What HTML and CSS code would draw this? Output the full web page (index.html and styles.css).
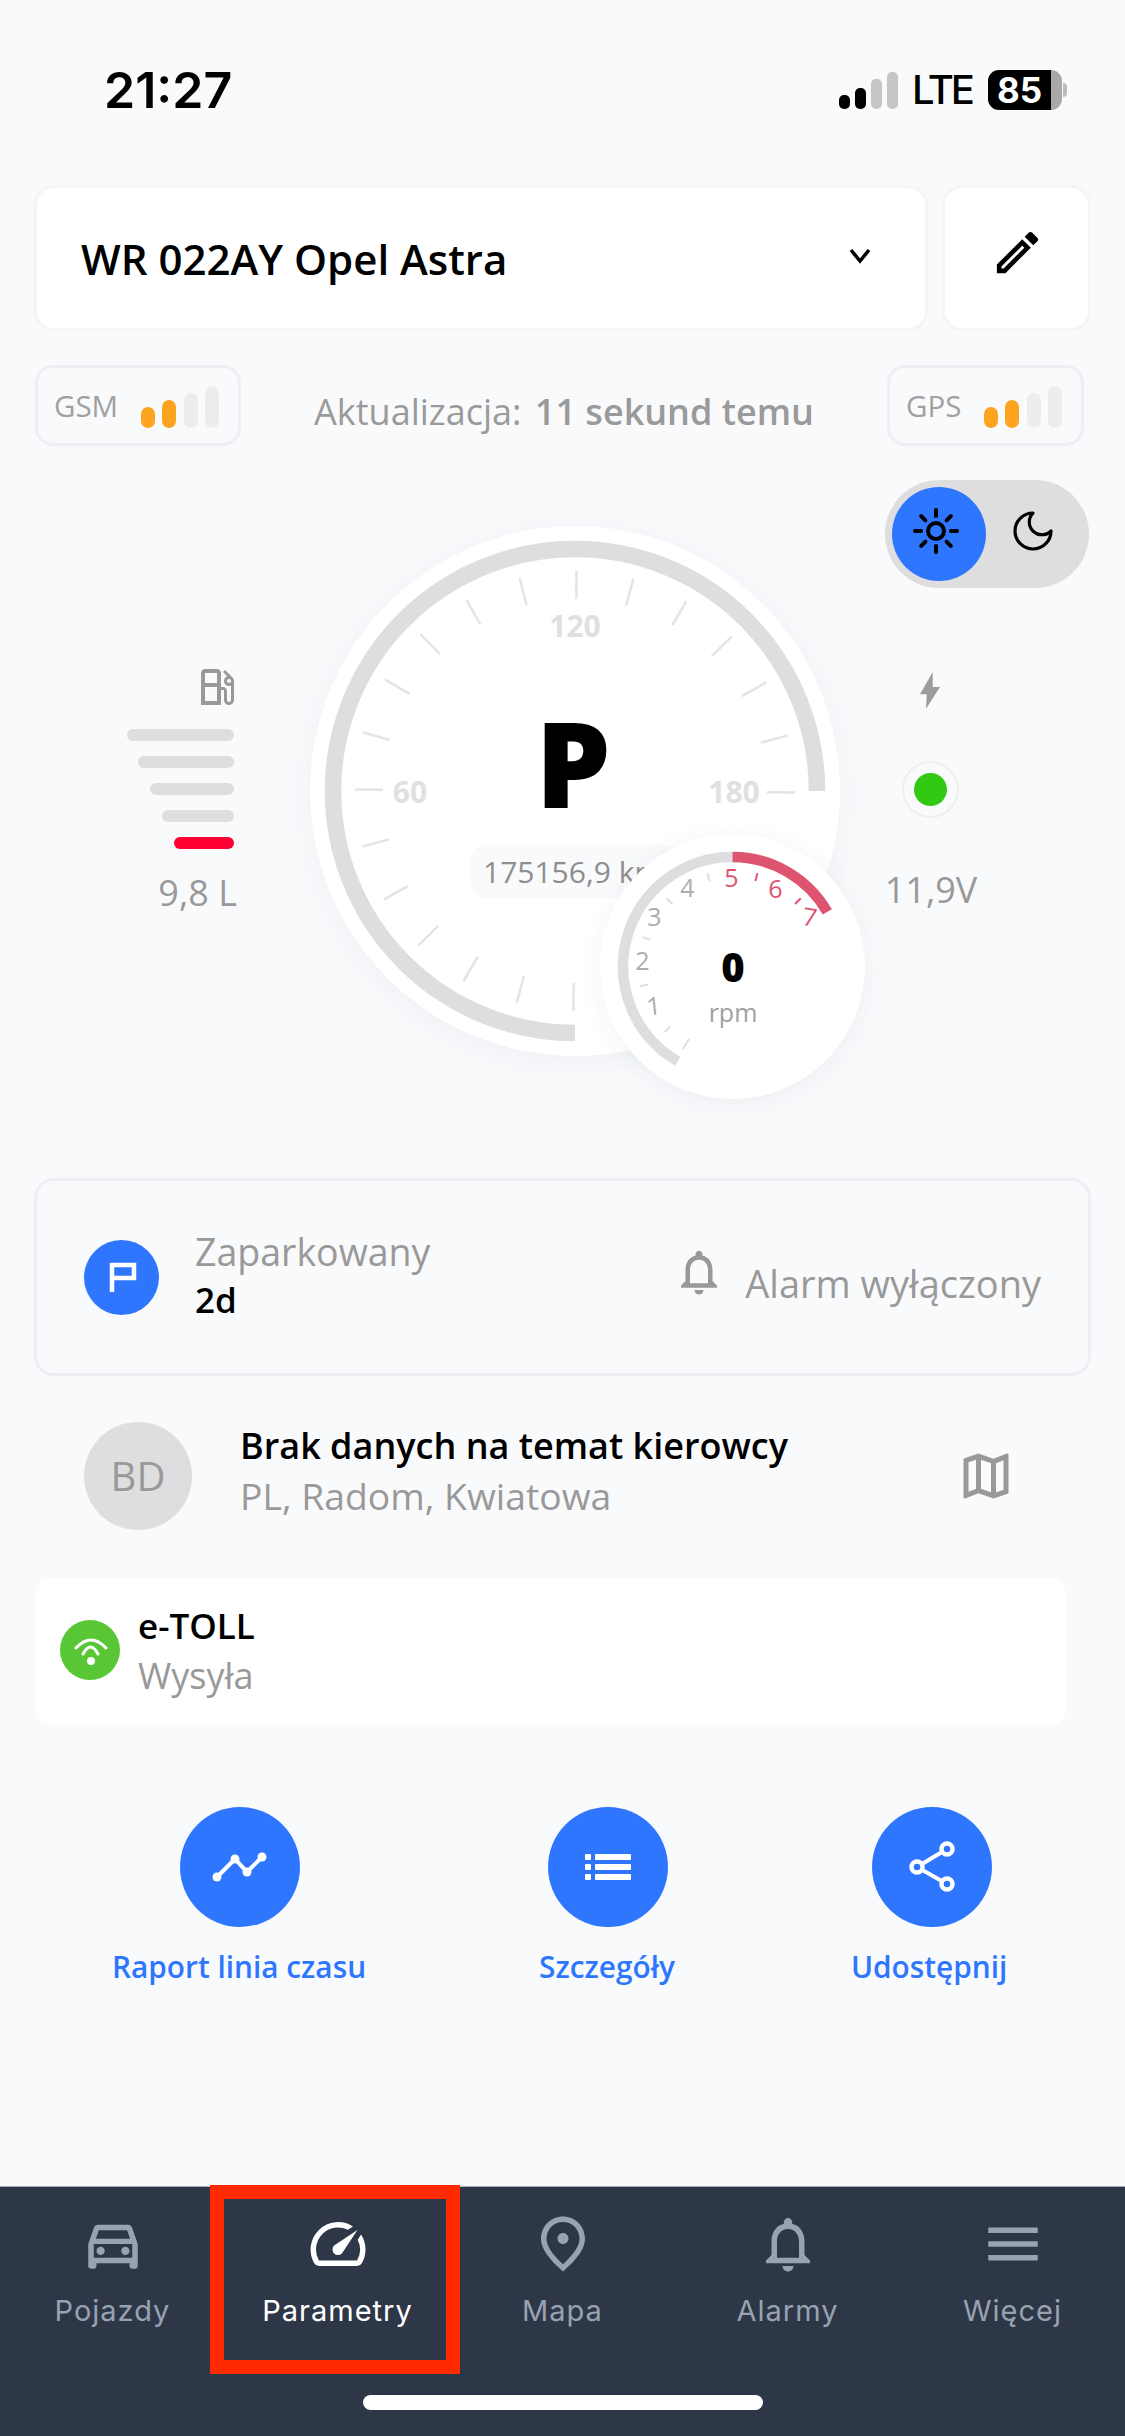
FILE: index.html
```html
<!DOCTYPE html>
<html lang="pl">

<head>
    <meta charset="UTF-8">
    <meta name="viewport" content="width=device-width, initial-scale=1.0">
    <title>Parametry</title>
    <link rel="stylesheet" href="styles.css">
</head>

<body>
    <div class="page">
        <!-- Status bar -->
        <div class="status">
            <span class="time">21:27</span>
            <div class="status-right">
                <div class="cell-bars">
                    <i class="on h1"></i><i class="on h2"></i><i class="h3"></i><i class="h4"></i>
                </div>
                <span class="lte">LTE</span>
                <div class="battery"><span>85</span></div>
                <div class="battery-nub"></div>
            </div>
        </div>

        <!-- Vehicle selector -->
        <div class="vehicle-row">
            <div class="card vehicle-select">
                <span>WR 022AY Opel Astra</span>
                <svg class="chevron" viewBox="0 0 24 16"><polyline points="3,2 12,13 21,2"></polyline></svg>
            </div>
            <div class="card vehicle-edit">
                <svg class="icon-edit" viewBox="0 0 24 24"><path d="M14.06 9.02l.92.92L5.92 19H5v-.92l9.06-9.06M17.66 3c-.25 0-.51.1-.7.29l-1.83 1.83 3.75 3.75 1.83-1.83c.39-.39.39-1.02 0-1.41l-2.34-2.34c-.2-.2-.45-.29-.71-.29zm-3.6 3.19L3 17.25V21h3.75L17.81 9.94l-3.75-3.75z"></path></svg>
            </div>
        </div>

        <!-- GSM / GPS -->
        <div class="signal-row">
            <div class="chip">
                <span>GSM</span>
                <div class="chip-bars"><i class="on h1"></i><i class="on h2"></i><i class="h3"></i><i class="h4"></i></div>
            </div>
            <p class="updated">Aktualizacja: <b>11 sekund temu</b></p>
            <div class="chip chip-gps">
                <span>GPS</span>
                <div class="chip-bars"><i class="on h1"></i><i class="on h2"></i><i class="h3"></i><i class="h4"></i></div>
            </div>
        </div>

        <!-- Dashboard -->
        <div class="dash">
            <div class="fuel">
                <svg class="icon-fuel" viewBox="0 0 24 24"><path d="M19.77 7.23l.01-.01-3.72-3.72L15 4.56l2.11 2.11c-.94.36-1.61 1.26-1.61 2.33 0 1.38 1.12 2.5 2.5 2.5.36 0 .69-.08 1-.21v7.21c0 .55-.45 1-1 1s-1-.45-1-1V14c0-1.1-.9-2-2-2h-1V5c0-1.1-.9-2-2-2H6c-1.1 0-2 .9-2 2v16h10v-7.5h1.5v5c0 1.38 1.12 2.5 2.5 2.5s2.5-1.12 2.5-2.5V9c0-.69-.28-1.32-.73-1.77zM12 13.5V19H6v-7h6v1.5zm0-3.5H6V5h6v5zm6 0c-.55 0-1-.45-1-1s.45-1 1-1 1 .45 1 1-.45 1-1 1z"></path></svg>
                <div class="fuel-bars">
                    <i class="b1"></i><i class="b2"></i><i class="b3"></i><i class="b4"></i><i class="b5"></i>
                </div>
                <span class="fuel-label">9,8 L</span>
            </div>

            <div class="gauge">
                <div class="speedo">
                    <svg viewBox="0 0 530 530">
                        <path class="speedo-arc" d="M507 265 A242 242 0 1 0 265 507"></path>
                        <g class="ticks" transform="rotate(0.4 265 265)">
                            <line x1="457" y1="265" x2="485" y2="265"></line>
                            <line x1="457" y1="265" x2="485" y2="265" transform="rotate(-15 265 265)"></line>
                            <line x1="457" y1="265" x2="485" y2="265" transform="rotate(-30 265 265)"></line>
                            <line x1="457" y1="265" x2="485" y2="265" transform="rotate(-45 265 265)"></line>
                            <line x1="457" y1="265" x2="485" y2="265" transform="rotate(-60 265 265)"></line>
                            <line x1="457" y1="265" x2="485" y2="265" transform="rotate(-75 265 265)"></line>
                            <line x1="457" y1="265" x2="485" y2="265" transform="rotate(-90 265 265)"></line>
                            <line x1="457" y1="265" x2="485" y2="265" transform="rotate(-105 265 265)"></line>
                            <line x1="457" y1="265" x2="485" y2="265" transform="rotate(-120 265 265)"></line>
                            <line x1="457" y1="265" x2="485" y2="265" transform="rotate(-135 265 265)"></line>
                            <line x1="457" y1="265" x2="485" y2="265" transform="rotate(-150 265 265)"></line>
                            <line x1="457" y1="265" x2="485" y2="265" transform="rotate(-165 265 265)"></line>
                            <line x1="457" y1="265" x2="485" y2="265" transform="rotate(-180 265 265)"></line>
                            <line x1="457" y1="265" x2="485" y2="265" transform="rotate(-195 265 265)"></line>
                            <line x1="457" y1="265" x2="485" y2="265" transform="rotate(-210 265 265)"></line>
                            <line x1="457" y1="265" x2="485" y2="265" transform="rotate(-225 265 265)"></line>
                            <line x1="457" y1="265" x2="485" y2="265" transform="rotate(-240 265 265)"></line>
                            <line x1="457" y1="265" x2="485" y2="265" transform="rotate(-255 265 265)"></line>
                            <line x1="457" y1="265" x2="485" y2="265" transform="rotate(-270 265 265)"></line>
                        </g>
                        <text class="speed-num" x="100" y="277">60</text>
                        <text class="speed-num" x="265" y="111">120</text>
                        <text class="speed-num" x="424" y="277">180</text>
                        <text class="gear" x="263" y="282">P</text>
                        <rect class="odo-pill" x="161" y="319" width="207" height="53" rx="14"></rect>
                        <text class="odo" x="173" y="357">175156,9 km</text>
                    </svg>
                </div>

                <div class="rpm">
                    <svg viewBox="0 0 265 265">
                        <path class="rpm-arc" d="M132.5 23 A109.5 109.5 0 0 0 77.75 227.3"></path>
                        <path class="rpm-arc red" d="M132.5 23 A109.5 109.5 0 0 1 227.3 77.75"></path>
                        <g class="rpm-ticks">
                            <line x1="132.5" y1="36" x2="132.5" y2="48" transform="rotate(-149 132.5 132.5)"></line>
                            <line x1="132.5" y1="38" x2="132.5" y2="46" transform="rotate(-134 132.5 132.5)"></line>
                            <line x1="132.5" y1="38" x2="132.5" y2="46" transform="rotate(-102 132.5 132.5)"></line>
                            <line x1="132.5" y1="38" x2="132.5" y2="46" transform="rotate(-72 132.5 132.5)"></line>
                            <line x1="132.5" y1="38" x2="132.5" y2="46" transform="rotate(-44 132.5 132.5)"></line>
                            <line x1="132.5" y1="36" x2="132.5" y2="44" transform="rotate(-15 132.5 132.5)"></line>
                        </g>
                        <g class="rpm-ticks red">
                            <line x1="132.5" y1="36" x2="132.5" y2="44" transform="rotate(15 132.5 132.5)"></line>
                            <line x1="132.5" y1="36" x2="132.5" y2="44" transform="rotate(45 132.5 132.5)"></line>
                        </g>
                        <text class="rpm-num" x="54.5" y="181" transform="rotate(-6 54.5 181)">1</text>
                        <text class="rpm-num" x="42.5" y="136">2</text>
                        <text class="rpm-num" x="54.5" y="92">3</text>
                        <text class="rpm-num" x="87.5" y="63">4</text>
                        <text class="rpm-num red" x="131.5" y="53">5</text>
                        <text class="rpm-num red" x="175.5" y="64">6</text>
                        <text class="rpm-num red" x="208.5" y="92" transform="rotate(8 208.5 92)">7</text>
                        <text class="rpm-value" x="133" y="148">0</text>
                        <text class="rpm-unit" x="133" y="188">rpm</text>
                    </svg>
                </div>
            </div>

            <div class="dash-right">
                <div class="theme-toggle">
                    <div class="theme-knob">
                        <svg class="icon-sun" viewBox="0 0 48 48">
                            <circle cx="24" cy="24" r="8"></circle>
                            <path d="M24 3v6M24 39v6M3 24h6M39 24h6M9.2 9.2l4.2 4.2M34.6 34.6l4.2 4.2M9.2 38.8l4.2-4.2M34.6 13.4l4.2-4.2"></path>
                        </svg>
                    </div>
                    <div class="theme-off">
                        <svg class="icon-moon" viewBox="0 0 24 24"><path d="M12 3a6 6 0 0 0 9 9 9 9 0 1 1-9-9Z"></path></svg>
                    </div>
                </div>
                <div class="volt">
                    <svg class="icon-bolt" viewBox="0 0 20 37"><polygon points="12.7,0 0,22.3 6.7,22.3 6,36.7 20,15 12.7,15"></polygon></svg>
                    <div class="volt-ring"><i></i></div>
                    <span class="volt-label">11,9V</span>
                </div>
            </div>
        </div>

        <!-- Parked / alarm -->
        <div class="parked">
            <div class="parked-badge">
                <svg viewBox="0 0 75 75"><path d="M28 52 V25 H50 V38 H28"></path></svg>
            </div>
            <div class="parked-text">
                <span class="muted">Zaparkowany</span>
                <span class="strong">2d</span>
            </div>
            <div class="alarm">
                <svg class="icon-bell" viewBox="0 0 24 24"><path d="M12 22c1.1 0 2-.9 2-2h-4c0 1.1.9 2 2 2zm6-6v-5c0-3.07-1.63-5.64-4.5-6.32V4c0-.83-.67-1.5-1.5-1.5s-1.5.67-1.5 1.5v.68C7.64 5.36 6 7.92 6 11v5l-2 2v1h16v-1l-2-2zm-2 1H8v-6c0-2.48 1.51-4.5 4-4.5s4 2.02 4 4.5v6z"></path></svg>
                <span class="muted">Alarm wyłączony</span>
            </div>
        </div>

        <!-- Driver -->
        <div class="driver">
            <div class="avatar">BD</div>
            <div class="driver-text">
                <span class="strong">Brak danych na temat kierowcy</span>
                <span class="muted">PL, Radom, Kwiatowa</span>
            </div>
            <svg class="icon-map" viewBox="0 0 24 24"><path d="M20.5 3l-.16.03L15 5.1 9 3 3.36 4.9c-.21.07-.36.25-.36.48V20.5c0 .28.22.5.5.5l.16-.03L9 18.9l6 2.1 5.64-1.9c.21-.07.36-.25.36-.48V3.5c0-.28-.22-.5-.5-.5zM10 5.47l4 1.4v11.66l-4-1.4V5.47zm-5 .99l3-1.01v11.7l-3 1.16V6.46zm14 11.08l-3 1.01V6.86l3-1.16v11.84z"></path></svg>
        </div>

        <!-- e-TOLL -->
        <div class="etoll">
            <div class="etoll-badge">
                <svg viewBox="0 0 60 60">
                    <path d="M16 28 Q31 12 46 28"></path>
                    <path d="M23 34 Q30.5 20 38 34"></path>
                    <circle cx="31" cy="41" r="4"></circle>
                </svg>
            </div>
            <div class="etoll-text">
                <span class="strong">e-TOLL</span>
                <span class="muted">Wysyła</span>
            </div>
        </div>

        <!-- Actions -->
        <div class="actions">
            <div class="action">
                <div class="action-btn">
                    <svg viewBox="0 0 60 60">
                        <polyline points="7,40 25,22 37,35 52,20"></polyline>
                        <circle cx="7" cy="40" r="4.5"></circle>
                        <circle cx="25" cy="22" r="4.5"></circle>
                        <circle cx="37" cy="35" r="4.5"></circle>
                        <circle cx="52" cy="20" r="4.5"></circle>
                    </svg>
                </div>
                <span>Raport linia czasu</span>
            </div>
            <div class="action">
                <div class="action-btn">
                    <svg viewBox="0 0 60 60">
                        <rect x="7" y="17" width="6" height="6" rx="1"></rect>
                        <rect x="17" y="17" width="36" height="6" rx="1"></rect>
                        <rect x="7" y="27" width="6" height="6" rx="1"></rect>
                        <rect x="17" y="27" width="36" height="6" rx="1"></rect>
                        <rect x="7" y="37" width="6" height="6" rx="1"></rect>
                        <rect x="17" y="37" width="36" height="6" rx="1"></rect>
                    </svg>
                </div>
                <span>Szczegóły</span>
            </div>
            <div class="action">
                <div class="action-btn">
                    <svg class="icon-share" viewBox="0 0 60 60">
                        <polyline points="45,12 15,30 45,47"></polyline>
                        <circle cx="15" cy="30" r="5.5"></circle>
                        <circle cx="45" cy="12" r="5.5"></circle>
                        <circle cx="45" cy="47" r="5.5"></circle>
                    </svg>
                </div>
                <span>Udostępnij</span>
            </div>
        </div>

        <!-- Bottom navigation -->
        <nav class="tabbar">
            <div class="tabs">
                <div class="tab">
                    <svg viewBox="0 0 24 24"><path d="M18.92 6.01C18.72 5.42 18.16 5 17.5 5h-11c-.66 0-1.21.42-1.42 1.01L3 12v8c0 .55.45 1 1 1h1c.55 0 1-.45 1-1v-1h12v1c0 .55.45 1 1 1h1c.55 0 1-.45 1-1v-8l-2.08-5.99zM6.85 7h10.29l1.08 3.11H5.77L6.85 7zM19 17H5v-5h14v5z"></path><circle cx="7.5" cy="14.5" r="1.5"></circle><circle cx="16.5" cy="14.5" r="1.5"></circle></svg>
                    <span>Pojazdy</span>
                </div>
                <div class="tab active">
                    <svg viewBox="0 0 24 24"><path d="M20.38 8.57l-1.23 1.85a8 8 0 0 1-.22 7.58H5.07A8 8 0 0 1 15.58 6.85l1.85-1.23A10 10 0 0 0 3.35 19a2 2 0 0 0 1.72 1h13.85a2 2 0 0 0 1.74-1 10 10 0 0 0-.27-10.44zm-9.79 6.84a2 2 0 0 0 2.83 0l5.66-8.49-8.49 5.66a2 2 0 0 0 0 2.83z"></path></svg>
                    <span>Parametry</span>
                </div>
                <div class="tab">
                    <svg viewBox="0 0 24 24"><path d="M12 12c-1.1 0-2-.9-2-2s.9-2 2-2 2 .9 2 2-.9 2-2 2zm6-1.8C18 6.57 15.35 4 12 4s-6 2.57-6 6.2c0 2.34 1.95 5.44 6 9.14 4.05-3.7 6-6.8 6-9.14zM12 2c4.2 0 8 3.22 8 8.2 0 3.32-2.67 7.25-8 11.8-5.33-4.55-8-8.48-8-11.8C4 5.22 7.8 2 12 2z"></path></svg>
                    <span>Mapa</span>
                </div>
                <div class="tab">
                    <svg viewBox="0 0 24 24"><path d="M12 22c1.1 0 2-.9 2-2h-4c0 1.1.9 2 2 2zm6-6v-5c0-3.07-1.63-5.64-4.5-6.32V4c0-.83-.67-1.5-1.5-1.5s-1.5.67-1.5 1.5v.68C7.64 5.36 6 7.92 6 11v5l-2 2v1h16v-1l-2-2zm-2 1H8v-6c0-2.48 1.51-4.5 4-4.5s4 2.02 4 4.5v6z"></path></svg>
                    <span>Alarmy</span>
                </div>
                <div class="tab">
                    <svg viewBox="0 0 24 24"><path d="M3 18h18v-2H3v2zm0-5h18v-2H3v2zm0-7v2h18V6H3z"></path></svg>
                    <span>Więcej</span>
                </div>
            </div>
            <div class="home-bar"></div>
            <div class="highlight"></div>
        </nav>
    </div>
</body>

</html>
```

FILE: styles.css
```css
/* Basic reset */
* {
    margin: 0;
    padding: 0;
    box-sizing: border-box;
}

body {
    font-family: "Open Sans", sans-serif;
    background-color: #f9fafc;
    color: #000;
}

i {
    display: block;
}

svg {
    display: block;
    flex-shrink: 0;
}

.page {
    width: 1125px;
    height: 2436px;
    display: flex;
    flex-direction: column;
    overflow: hidden;
}

.muted {
    color: #999;
}

/* Status bar */
.status {
    height: 185px;
    padding: 60px 58px 0 104px;
    display: flex;
    justify-content: space-between;
    align-items: flex-start;
    font-family: Inter, sans-serif;
}

.time {
    font-size: 50px;
    font-weight: 600;
    line-height: 60px;
}

.status-right {
    display: flex;
    align-items: center;
    height: 60px;
}

.cell-bars {
    display: flex;
    align-items: flex-end;
    gap: 5.5px;
    height: 37px;
    margin-right: 14px;
}

.cell-bars i {
    width: 10.5px;
    border-radius: 5px;
    background-color: #c6c6c8;
}

.cell-bars .on {
    background-color: #000;
}

.cell-bars .h1 { height: 14px; }
.cell-bars .h2 { height: 21px; }
.cell-bars .h3 { height: 30px; }
.cell-bars .h4 { height: 37px; }

.lte {
    font-size: 40px;
    font-weight: 500;
    line-height: 60px;
    letter-spacing: -3px;
    margin-right: 16px;
}

.battery {
    width: 74px;
    height: 40px;
    border-radius: 11px;
    background: linear-gradient(90deg, #000 85%, #a9a9a9 85%);
    color: #fff;
    font-size: 35px;
    font-weight: 700;
    line-height: 40px;
    padding-left: 9px;
}

.battery-nub {
    width: 4px;
    height: 14px;
    margin-left: 1px;
    border-radius: 0 4px 4px 0;
    background-color: #bbb;
}

/* Vehicle selector */
.vehicle-row {
    display: flex;
    gap: 14px;
    padding: 0 34px;
}

.card {
    height: 146px;
    background-color: #fff;
    border: 3px solid #f4f5f7;
    border-radius: 20px;
}

.vehicle-select {
    flex: 1;
    display: flex;
    align-items: center;
    justify-content: space-between;
    padding: 0 53px 0 44px;
    font-size: 42px;
    font-weight: 600;
}

.chevron {
    width: 24px;
    height: 16px;
    margin-top: -4px;
    fill: none;
    stroke: #000;
    stroke-width: 3.5;
}

.vehicle-edit {
    width: 149px;
    padding: 37px 0 0 45px;
}

.icon-edit {
    width: 55px;
    height: 55px;
}

/* GSM / GPS row */
.signal-row {
    display: flex;
    justify-content: space-between;
    margin-top: 34px;
    padding: 0 41px 0 35px;
}

.chip {
    width: 206px;
    height: 81px;
    display: flex;
    align-items: center;
    padding: 0 19px 0 16px;
    border: 3px solid #eeeff2;
    border-radius: 18px;
    color: #a0a0a0;
    font-size: 29.5px;
}

.chip-gps {
    width: 197px;
}

.chip-bars {
    display: flex;
    align-items: flex-end;
    gap: 7.5px;
    margin-left: auto;
    height: 42px;
    margin-top: 2px;
}

.chip-bars i {
    width: 14px;
    border-radius: 7px;
    background-color: #ededef;
}

.chip-bars .on {
    background-color: #fca420;
}

.chip-bars .h1 { height: 21px; }
.chip-bars .h2 { height: 28px; }
.chip-bars .h3 { height: 35px; }
.chip-bars .h4 { height: 42px; }

.updated {
    padding-top: 14px;
    font-size: 36px;
    word-spacing: 4px;
    line-height: 66px;
    color: #9a9a9a;
}

.updated b {
    font-weight: 600;
    word-spacing: 0;
}

/* Dashboard */
.dash {
    display: flex;
    height: 698px;
    margin-top: 34px;
}

.fuel {
    width: 310px;
    padding: 183px 76px 0 0;
    display: flex;
    flex-direction: column;
    align-items: flex-end;
    flex-shrink: 0;
}

.icon-fuel {
    width: 48px;
    height: 48px;
    margin-right: -7px;
    fill: #999;
}

.fuel-bars {
    display: flex;
    flex-direction: column;
    align-items: flex-end;
    gap: 15px;
    margin-top: 18px;
}

.fuel-bars i {
    height: 12px;
    border-radius: 6px;
    background-color: #dedee0;
}

.fuel-bars .b1 { width: 107px; }
.fuel-bars .b2 { width: 96px; }
.fuel-bars .b3 { width: 84px; }
.fuel-bars .b4 { width: 72px; }
.fuel-bars .b5 { width: 60px; background-color: #ff0033; }

.fuel-label {
    margin-top: 22px;
    margin-right: -3px;
    font-size: 36px;
    line-height: 44px;
    color: #999;
}

.gauge {
    position: relative;
    width: 555px;
    margin-top: 46px;
    flex-shrink: 0;
}

.speedo {
    width: 530px;
    height: 530px;
    border-radius: 50%;
    background-color: #fff;
    box-shadow: 0 6px 30px rgba(40, 50, 70, 0.05);
}

.speedo-arc {
    fill: none;
    stroke: #dedee0;
    stroke-width: 16.5;
}

.ticks line {
    stroke: #e4e4e6;
    stroke-width: 2.5;
}

.speed-num {
    font-size: 30px;
    font-weight: 700;
    fill: #e0e0e2;
    text-anchor: middle;
}

.gear {
    font-size: 119px;
    font-weight: 800;
    text-anchor: middle;
}

.odo-pill {
    fill: #f9fafc;
}

.odo {
    font-size: 30px;
    fill: #8e8e8e;
}

/* Small gauge lies over the big one */
.rpm {
    position: absolute;
    left: 290px;
    top: 308px;
    width: 265px;
    height: 265px;
    border-radius: 50%;
    background-color: #fff;
    box-shadow: 0 4px 24px rgba(40, 50, 70, 0.06);
}

.rpm-arc {
    fill: none;
    stroke: #dedee0;
    stroke-width: 10.5;
}

.rpm-arc.red {
    stroke: #de5470;
}

.rpm-ticks line {
    stroke: #dedee0;
    stroke-width: 2;
}

.rpm-ticks.red line {
    stroke: #de5470;
}

.rpm-num {
    font-size: 25px;
    fill: #adadad;
    text-anchor: middle;
}

.rpm-num.red {
    fill: #de5470;
}

.rpm-value {
    font-size: 40px;
    font-weight: 800;
    text-anchor: middle;
}

.rpm-unit {
    font-size: 25px;
    fill: #a0a0a0;
    text-anchor: middle;
}

.dash-right {
    padding-left: 20px;
}

.theme-toggle {
    width: 204px;
    height: 108px;
    display: flex;
    align-items: center;
    padding: 0 7px;
    border-radius: 54px;
    background-color: #dedee0;
}

.theme-knob,
.theme-off {
    width: 94px;
    height: 94px;
    display: flex;
    align-items: center;
    justify-content: center;
}

.theme-knob {
    border-radius: 50%;
    background-color: #2f76ff;
}

.icon-sun {
    width: 48px;
    height: 48px;
    margin-left: -6px;
    margin-top: -6px;
    fill: none;
    stroke: #000;
    stroke-width: 4;
    stroke-linecap: round;
}

.icon-moon {
    width: 48px;
    height: 48px;
    margin-top: -6px;
    fill: none;
    stroke: #000;
    stroke-width: 1.6;
    stroke-linejoin: round;
}

.volt {
    width: 132px;
    margin-left: -20px;
    margin-top: 84px;
    display: flex;
    flex-direction: column;
    align-items: center;
}

.icon-bolt {
    width: 20px;
    height: 37px;
    margin-right: 2px;
    fill: #9c9c9c;
}

.volt-ring {
    width: 57px;
    height: 57px;
    margin-top: 52px;
    margin-right: 2px;
    display: flex;
    align-items: center;
    justify-content: center;
    border: 2px solid #eeeff1;
    border-radius: 50%;
}

.volt-ring i {
    width: 33px;
    height: 33px;
    border-radius: 50%;
    background-color: #32c912;
}

.volt-label {
    margin-top: 50px;
    font-size: 36px;
    font-weight: 500;
    line-height: 44px;
    color: #999;
}

/* Parked card */
.parked {
    display: flex;
    align-items: center;
    height: 198px;
    margin: 0 34px;
    padding: 0 47px 0 47px;
    border: 3px solid #eeeff2;
    border-radius: 20px;
    font-size: 37.5px;
    font-weight: 500;
    line-height: 48px;
}

.parked-badge {
    width: 75px;
    height: 75px;
    border-radius: 50%;
    background-color: #2f76ff;
}

.parked-badge svg {
    fill: none;
    stroke: #fff;
    stroke-width: 4.5;
}

.parked-text {
    display: flex;
    flex-direction: column;
    margin-left: 36px;
    margin-top: -2px;
}

.parked-text .strong {
    font-size: 35px;
}

.strong {
    color: #000;
    font-weight: 600;
}

.alarm {
    display: flex;
    align-items: flex-start;
    margin-left: auto;
    gap: 19px;
}

.icon-bell {
    width: 54px;
    height: 54px;
    margin-top: -2px;
    fill: #999;
}

.alarm .muted {
    font-size: 38px;
    margin-top: 12px;
}

/* Driver */
.driver {
    display: flex;
    align-items: center;
    margin-top: 46px;
    padding: 0 109px 0 84px;
    font-size: 36px;
    line-height: 50px;
}

.avatar {
    width: 108px;
    height: 108px;
    display: flex;
    align-items: center;
    justify-content: center;
    border-radius: 50%;
    background-color: #dedee0;
    color: #999;
    font-size: 40px;
}

.driver-text {
    display: flex;
    flex-direction: column;
    margin-left: 48px;
    margin-top: -10px;
}

.driver-text .muted {
    font-size: 37.3px;
    font-weight: 500;
}

.icon-map {
    width: 60px;
    height: 60px;
    margin-left: auto;
    fill: #999;
}

/* e-TOLL */
.etoll {
    display: flex;
    align-items: center;
    width: 1029px;
    height: 147px;
    margin: 48px 0 0 36px;
    padding-left: 24px;
    border-radius: 14px;
    background-color: #fff;
    font-size: 35px;
    line-height: 50px;
}

.etoll-badge {
    width: 60px;
    height: 60px;
    margin-top: -4px;
    border-radius: 50%;
    background-color: #59c735;
}

.etoll-badge svg {
    fill: none;
    stroke: #fff;
    stroke-width: 3;
    stroke-linecap: round;
}

.etoll-badge circle {
    fill: #fff;
    stroke: none;
}

.etoll-text {
    display: flex;
    flex-direction: column;
    margin-left: 18px;
    margin-top: -2px;
}

.etoll-text .muted {
    font-size: 36px;
}

/* Actions */
.actions {
    display: flex;
    gap: 173px;
    margin-top: 82px;
    padding-left: 112px;
}

.action {
    display: flex;
    flex-direction: column;
    align-items: center;
    color: #2f76ff;
    font-size: 29.8px;
    font-weight: 600;
    line-height: 40px;
}

.action:last-child {
    margin-left: 3px;
}

.action-btn {
    width: 120px;
    height: 120px;
    margin-bottom: 20px;
    margin-left: 2px;
    padding: 30px;
    border-radius: 50%;
    background-color: #2f76ff;
}

.action:last-child .action-btn {
    margin-left: 5px;
}

.action-btn svg {
    width: 60px;
    height: 60px;
    fill: #fff;
}

.action-btn polyline {
    fill: none;
    stroke: #fff;
    stroke-width: 4;
}

.icon-share circle {
    fill: #2f76ff;
    stroke: #fff;
    stroke-width: 4.5;
}

/* Bottom navigation */
.tabbar {
    position: relative;
    margin-top: auto;
    height: 250px;
    padding-top: 24px;
    border-top: 1px solid #a9adb3;
    background-color: #2e3748;
}

.tabs {
    display: grid;
    grid-template-columns: repeat(5, 225px);
}

.tab {
    display: flex;
    flex-direction: column;
    align-items: center;
    color: #98a2b0;
    font-family: Inter, sans-serif;
    font-size: 29px;
    letter-spacing: 1px;
    line-height: 36px;
}

.tab svg {
    width: 66px;
    height: 66px;
    margin-bottom: 16px;
    fill: #98a2b0;
}

.tab.active {
    color: #fff;
}

.tab.active svg {
    fill: #fff;
}

.home-bar {
    width: 400px;
    height: 15px;
    margin: 66px auto 0;
    border-radius: 8px;
    background-color: #fff;
}

/* Red frame drawn on top of the active tab */
.highlight {
    position: absolute;
    left: 210px;
    top: -2px;
    width: 250px;
    height: 189px;
    border: 14px solid #ff2a00;
}
```
